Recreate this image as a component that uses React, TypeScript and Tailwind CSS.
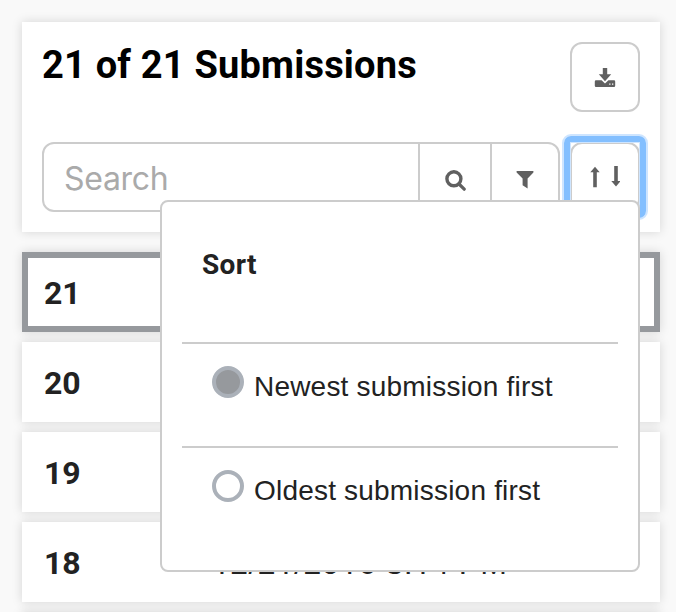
const SHADOW = "shadow-[0_0_10px_rgba(0,0,0,0.15)]";

function DownloadIcon() {
  return (
    <svg width="22" height="20" viewBox="0 0 22 20" fill="#606060">
      <path d="M8.8 0h4.4v6.2h4L11 13.2 4.8 6.2h4z" />
      <path fillRule="evenodd" d="M2 12.3h5.6L11 15.4l3.4-3.1H20a1.2 1.2 0 0 1 1.2 1.2v4.3A1.2 1.2 0 0 1 20 19H2a1.2 1.2 0 0 1-1.2-1.2v-4.3A1.2 1.2 0 0 1 2 12.3zM15.2 15.5v1.3h1.3v-1.3zM18 15.5v1.3h1.3v-1.3z" />
    </svg>
  );
}

function SearchIcon() {
  return (
    <svg width="21" height="21" viewBox="0 0 21 21" fill="none" stroke="#606060">
      <circle cx="8.9" cy="8.8" r="7" strokeWidth="3.4" />
      <path d="M14 14l5.2 5.2" strokeWidth="3.2" strokeLinecap="round" />
    </svg>
  );
}

function FilterIcon() {
  return (
    <svg width="18" height="18" viewBox="0 0 18 18" fill="#606060">
      <path d="M.6 0h16.8v1.6L11.6 7.6v10L6.6 14.2V7.6L.6 1.6z" />
    </svg>
  );
}

function SortIcon() {
  return (
    <svg width="30" height="22" viewBox="0 0 30 22" fill="#606060">
      <path d="M5 .8l4.7 5.4H6.8V21.2H3.2V6.2H.3zM24.2 0h3.6V15h2.9L26 20.5 21.3 15h2.9z" />
    </svg>
  );
}

const rows = [
  { id: 21, date: "", active: true },
  { id: 20, date: "" },
  { id: 19, date: "" },
  { id: 18, date: "12/21/2016 3:14 PM" },
];

// The digit one is set in Roboto, whose form has no foot.
function DateText({ value }: { value: string }) {
  return (
    <span className="-ml-0.5 whitespace-pre pt-[2px] text-[32px] leading-8 tracking-[0.35px] font-['Liberation_Sans',sans-serif]">
      {value.split(/(1)/).map((part, i) =>
        part === "1" ? <span key={i} className="font-[Roboto,sans-serif]">1</span> : part
      )}
    </span>
  );
}

function Option({ label, checked }: { label: string; checked?: boolean }) {
  return (
    <label className="mx-5 flex h-[104px] items-start border-t-2 border-[#ccc] pl-[30px] pt-[22px]">
      <span className={`size-8 shrink-0 rounded-full border-4 border-[#abb1b9] ${checked ? "bg-[#96999d]" : "bg-white"}`} />
      <span className="ml-[10px] mt-[5px] whitespace-nowrap text-[28px] leading-8 tracking-[0.2px] text-[#222] font-['Liberation_Sans',sans-serif]">{label}</span>
    </label>
  );
}

export default function App() {
  return (
    <div className="relative h-[612px] w-[676px] overflow-hidden bg-[#f9f9f9] pl-[22px] pt-[22px] pr-4 font-[Roboto,sans-serif]">
      <header className={`h-[210px] bg-white px-5 pt-5 ${SHADOW}`}>
        <div className="flex items-start justify-between">
          <h1 className="whitespace-nowrap text-[38px] font-bold leading-[46px] tracking-[0.2px] text-black">21 of 21 Submissions</h1>
          <button className="flex size-[70px] items-center justify-center rounded-xl border-2 border-[#ccc] pt-[2px]">
            <DownloadIcon />
          </button>
        </div>
        <div className="mt-[30px] flex gap-[10px]">
          <div className="flex h-[70px] w-[518px] rounded-xl border-2 border-[#ccc]">
            <div className="w-[374px] pl-5 text-[32px] leading-[70px] tracking-[-0.3px] text-[#aaa] font-[Inter,sans-serif]">Search</div>
            <button className="flex w-[72px] items-center justify-center border-l-2 border-[#ccc] pt-[6px]">
              <SearchIcon />
            </button>
            <button className="flex flex-1 items-center justify-center border-l-2 border-[#ccc] pr-px pt-[6px]">
              <FilterIcon />
            </button>
          </div>
          <button className="relative flex size-[70px] items-center justify-center rounded-xl border-2 border-[#ccc]">
            <SortIcon />
            <span className="absolute -inset-[10px] rounded-[9px] border-2 border-[#cee5ff]">
              <span className="block size-full rounded-[7px] border-[6px] border-[#83bfff]">
                <span className="block size-full border border-[#cee5ff]" />
              </span>
            </span>
          </button>
        </div>
      </header>
      <main className="mt-5 flex flex-col gap-[10px]">
        {rows.map((r) => (
          <div key={r.id} className={`flex h-20 shrink-0 items-center bg-white text-[#222] ${SHADOW} ${r.active ? "border-[6px] border-[#96999d] pl-4" : "pl-[22px]"}`}>
            <span className="w-[170px] pt-0.5 text-[32px] font-bold leading-10">{r.id}</span>
            {r.date && <DateText value={r.date} />}
          </div>
        ))}
        <div className={`h-20 shrink-0 bg-white ${SHADOW}`} />
      </main>
      <section className="absolute left-[160px] top-[200px] h-[372px] w-[480px] rounded-lg border-2 border-[#ccc] bg-white">
        <h2 className="h-[140px] pl-10 pt-[47px] text-[28px] font-bold leading-8 tracking-[0.35px] text-[#222]">Sort</h2>
        <Option label="Newest submission first" checked />
        <Option label="Oldest submission first" />
      </section>
    </div>
  );
}
